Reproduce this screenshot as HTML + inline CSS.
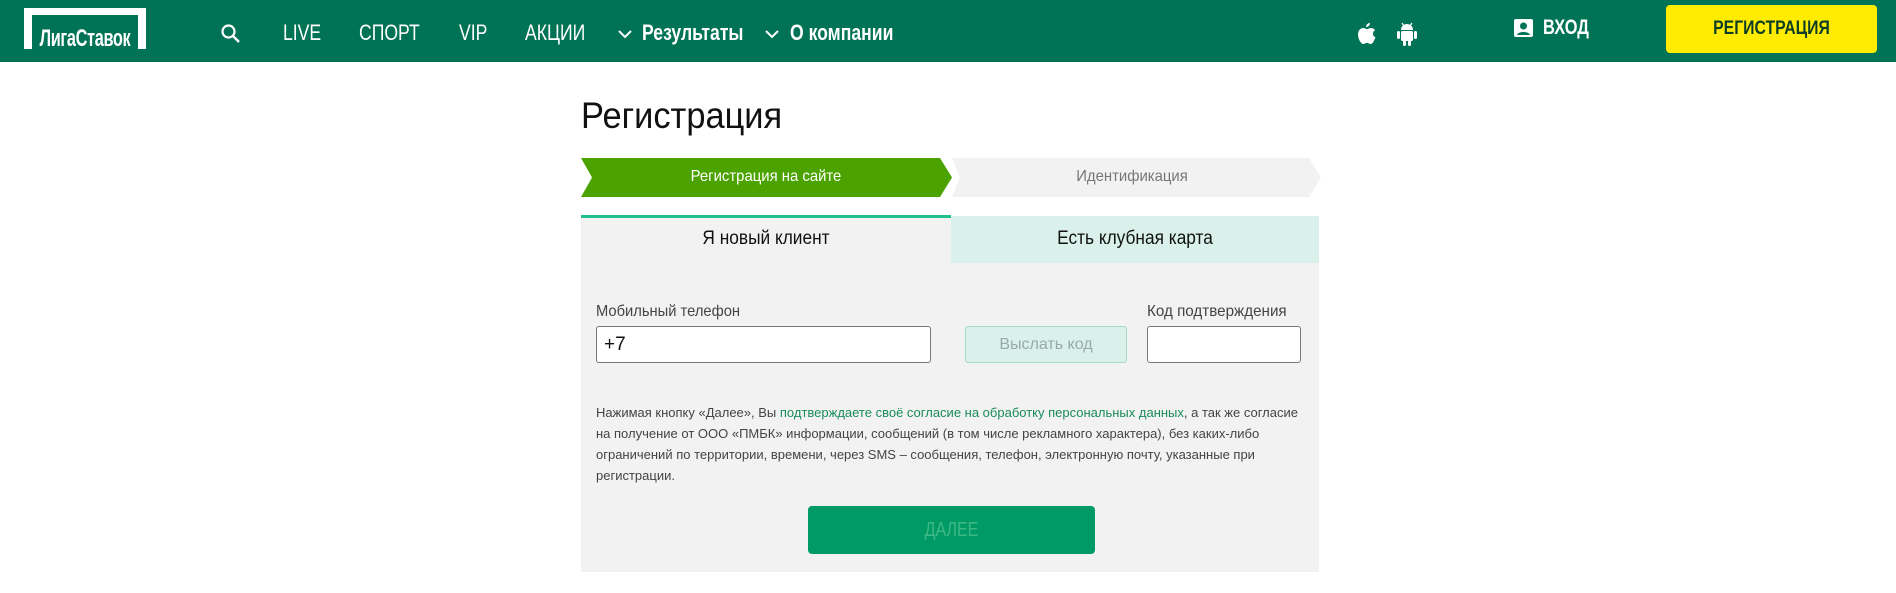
<!DOCTYPE html>
<html><head><meta charset="utf-8"><style>
*{margin:0;padding:0;box-sizing:border-box}
body{width:1896px;height:593px;background:#fff;font-family:"Liberation Sans",sans-serif;position:relative;overflow:hidden;color:#222}
.a{position:absolute}
.hdr{left:0;top:0;width:1896px;height:62px;background:#007356}
.nav{color:#fff;font-size:22px;top:20px;line-height:26px;transform:scaleX(0.8);transform-origin:left center;white-space:nowrap}
.b{font-weight:bold}
</style></head><body>
<div class="a hdr"></div>
<div class="a" style="left:24px;top:8px;width:122px;height:41px;background:#fff"></div>
<div class="a" style="left:32px;top:15px;width:106px;height:34px;background:#007356"></div>
<div class="a b" style="left:10px;top:25px;width:150px;text-align:center;color:#fff;font-size:24px;letter-spacing:-0.5px;transform:scaleX(0.68);white-space:nowrap">ЛигаСтавок</div>
<svg class="a" style="left:220px;top:23px" width="22" height="22" viewBox="0 0 22 22"><circle cx="8.5" cy="8.5" r="6" fill="none" stroke="#fff" stroke-width="2.2"/><path d="M13 13l6 6" stroke="#fff" stroke-width="2.4"/></svg>
<div class="a nav" style="left:283px">LIVE</div>
<div class="a nav" style="left:359px">СПОРТ</div>
<div class="a nav" style="left:459px">VIP</div>
<div class="a nav" style="left:525px">АКЦИИ</div>
<svg class="a" style="left:617px;top:28px" width="16" height="12"><path d="M2 3l6 6 6-6" fill="none" stroke="#fff" stroke-width="2"/></svg>
<div class="a nav b" style="left:642px">Результаты</div>
<svg class="a" style="left:764px;top:28px" width="16" height="12"><path d="M2 3l6 6 6-6" fill="none" stroke="#fff" stroke-width="2"/></svg>
<div class="a nav b" style="left:790px">О компании</div>
<svg class="a" style="left:1358px;top:22px" width="18" height="23" viewBox="0 0 18 23"><path d="M12 1c0 2-1.5 4-4 4 0-2 1.7-4 4-4zM9 7c1.5 0 2.5-1 4-1 2 0 3.5 1.3 4 2.3-3 1.700-2.500 6 .5 7-1 2.700-2.700 6.700-4.700 6.700-1.500 0-2-1-3.800-1s-2.500 1-3.800 1C3 22 0 17 0 12.500 0 8.500 2.600 6 5 6c1.500 0 2.800 1 4 1z" fill="#fff"/></svg>
<svg class="a" style="left:1397px;top:22px" width="20" height="24" viewBox="0 0 20 24"><path d="M4 8a6 6 0 0 1 12 0z" fill="#fff"/><path d="M5 1l2 3M15 1l-2 3" stroke="#fff" stroke-width="1.2"/><rect x="4" y="9" width="12" height="10" rx="1.5" fill="#fff"/><rect x="0" y="9" width="3" height="8" rx="1.5" fill="#fff"/><rect x="17" y="9" width="3" height="8" rx="1.5" fill="#fff"/><rect x="6" y="17" width="3" height="7" rx="1.5" fill="#fff"/><rect x="11" y="17" width="3" height="7" rx="1.5" fill="#fff"/></svg>
<svg class="a" style="left:1514px;top:19px" width="19" height="18" viewBox="0 0 19 18"><rect width="19" height="18" rx="2" fill="#fff"/><circle cx="9.5" cy="7" r="3.5" fill="#007356"/><path d="M3 16c1-4 12-4 13 0z" fill="#007356"/></svg>
<div class="a b" style="left:1543px;top:16px;color:#fff;font-size:21px;transform:scaleX(0.78);transform-origin:left center">ВХОД</div>
<div class="a" style="left:1666px;top:5px;width:211px;height:48px;background:#ffec00;border-radius:4px"></div>
<div class="a b" style="left:1666px;top:5px;width:211px;height:48px;text-align:center;line-height:48px;font-size:19px;color:#0d3d26;transform:scaleX(0.83)">РЕГИСТРАЦИЯ</div>

<div class="a" style="left:581px;top:95px;font-size:37px;color:#111;transform:scaleX(0.93);transform-origin:left center">Регистрация</div>
<svg class="a" style="left:580px;top:158px" width="742" height="40"><polygon points="1,0 360,0 372,19.5 360,39 1,39 12,19.5" fill="#4ca300"/><polygon points="372,0 729,0 741,19.5 729,39 372,39 380,19.5" fill="#f2f2f2"/></svg>
<div class="a" style="left:581px;top:168px;width:370px;text-align:center;color:#fff;font-size:16px;transform:scaleX(0.93)">Регистрация на сайте</div>
<div class="a" style="left:951px;top:168px;width:362px;text-align:center;color:#777;font-size:16px;transform:scaleX(0.93)">Идентификация</div>

<div class="a" style="left:581px;top:216px;width:738px;height:356px;background:#f2f2f2"></div>
<div class="a" style="left:581px;top:215px;width:370px;height:3px;background:#21bf8f"></div>
<div class="a" style="left:951px;top:216px;width:368px;height:47px;background:#d9f1ea"></div>
<div class="a" style="left:581px;top:228px;width:370px;text-align:center;font-size:19px;color:#111;transform:scaleX(0.91)">Я новый клиент</div>
<div class="a" style="left:951px;top:228px;width:368px;text-align:center;font-size:19px;color:#111;transform:scaleX(0.91)">Есть клубная карта</div>

<div class="a" style="left:596px;top:303px;font-size:16px;color:#444;transform:scaleX(0.92);transform-origin:left center;white-space:nowrap">Мобильный телефон</div>
<div class="a" style="left:1147px;top:303px;font-size:16px;color:#444;transform:scaleX(0.95);transform-origin:left center;white-space:nowrap">Код подтверждения</div>
<div class="a" style="left:596px;top:326px;width:335px;height:37px;background:#fff;border:1px solid #777;border-radius:3px;padding-left:7px;line-height:35px;font-size:19px;color:#111">+7</div>
<div class="a" style="left:965px;top:326px;width:162px;height:37px;background:#d9f1ea;border:1px solid #a6dcc6;border-radius:3px;text-align:center;line-height:35px;font-size:16px;color:#9aa">Выслать код</div>
<div class="a" style="left:1147px;top:326px;width:154px;height:37px;background:#fff;border:1px solid #777;border-radius:3px"></div>

<div class="a" style="left:596px;top:402px;width:712px;font-size:13px;line-height:21px;color:#444">Нажимая кнопку «Далее», Вы <span style="color:#1a8c5b">подтверждаете своё согласие на обработку персональных данных</span>, а так же согласие на получение от ООО «ПМБК» информации, сообщений (в том числе рекламного характера), без каких-либо ограничений по территории, времени, через SMS – сообщения, телефон, электронную почту, указанные при регистрации.</div>
<div class="a" style="left:808px;top:506px;width:287px;height:48px;background:#009a66;border-radius:4px"></div>
<div class="a" style="left:808px;top:506px;width:287px;height:48px;text-align:center;line-height:48px;font-size:20px;color:#3db885;transform:scaleX(0.8)">ДАЛЕЕ</div>
</body></html>
